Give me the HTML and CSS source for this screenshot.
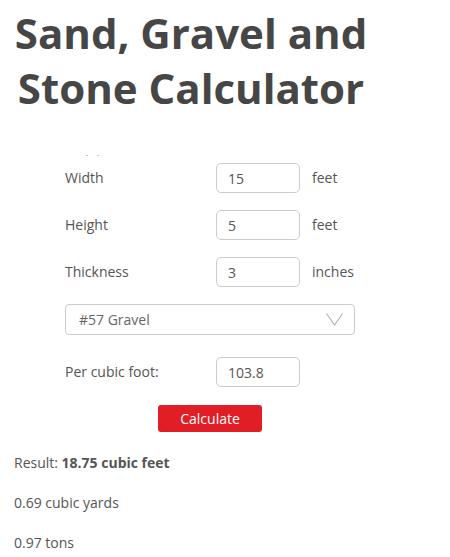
FILE: index.html
```html
<!DOCTYPE html>
<html lang="en">

<head>
    <meta charset="UTF-8">
    <meta name="viewport" content="width=device-width, initial-scale=1.0">
    <title>Sand, Gravel and Stone Calculator</title>
    <link rel="stylesheet" href="styles.css">
</head>

<body>

    <div class="page">
        <h1>Sand, Gravel and Stone Calculator</h1>

        <div class="calc">
            <div class="clipped"><i></i><i></i></div>

            <div class="row">
                <label for="width">Width</label>
                <input type="text" id="width" value="15">
                <span class="unit">feet</span>
            </div>
            <div class="row">
                <label for="height">Height</label>
                <input type="text" id="height" value="5">
                <span class="unit">feet</span>
            </div>
            <div class="row">
                <label for="thickness">Thickness</label>
                <input type="text" id="thickness" value="3">
                <span class="unit">inches</span>
            </div>

            <div class="select">
                <span>#57 Gravel</span>
                <svg width="17" height="13" viewBox="0 0 17 13">
                    <path d="M0.5 0.5 L8.5 12 L16.5 0.5" fill="none" stroke="#b0b0b0" stroke-width="1.1" />
                </svg>
            </div>

            <div class="row density">
                <label for="density">Per cubic foot:</label>
                <input type="text" id="density" value="103.8">
            </div>

            <div class="actions">
                <button>Calculate</button>
            </div>
        </div>

        <div class="results">
            <p>Result: <b>18.75 cubic feet</b></p>
            <p>0.69 cubic yards</p>
            <p>0.97 tons</p>
        </div>
    </div>

</body>

</html>
```

FILE: styles.css
```css
:root {
    --color-text: #555555;
    --color-title: #464646;
    --color-border: #cccccc;
    --accent: #e11d25;
    --font-family: "Open Sans", "Liberation Sans", Arial, sans-serif;
    --border-radius: 4px;
}

body {
    margin: 0;
    font-family: var(--font-family);
    font-size: 14px;
    color: var(--color-text);
    background: #ffffff;
}

.page {
    width: 382px;
}

h1 {
    margin: 0;
    padding-top: 5px;
    font-size: 42px;
    line-height: 55px;
    font-weight: 700;
    color: var(--color-title);
    text-align: center;
}

.calc {
    margin-top: 40px;
    padding-left: 65px;
    width: 290px;
}

.clipped {
    display: flex;
    height: 1px;
    padding-left: 21px;
    gap: 9px;
}

.clipped i {
    width: 2px;
    height: 1px;
    background: #c8c8c8;
}

.row {
    display: grid;
    grid-template-columns: 139px 84px auto;
    column-gap: 12px;
    align-items: center;
    margin-top: 10px;
    height: 37px;
}

.clipped+.row {
    margin-top: 3px;
}

.row label {
    line-height: 20px;
}

.row input {
    box-sizing: border-box;
    width: 84px;
    height: 30px;
    padding: 2px 11px 0;
    border: 1px solid var(--color-border);
    border-radius: 5px;
    font-family: var(--font-family);
    font-size: 14px;
    color: var(--color-text);
}

.select {
    box-sizing: border-box;
    display: flex;
    justify-content: space-between;
    align-items: center;
    margin-top: 14px;
    height: 31px;
    padding: 0 11px 1px 13px;
    border: 1px solid var(--color-border);
    border-radius: var(--border-radius);
    color: #666;
}

.row.density {
    margin-top: 18px;
}

.actions {
    display: flex;
    padding-left: 93px;
    margin-top: 15px;
}

.actions button {
    width: 104px;
    height: 27px;
    border: none;
    border-radius: 3px;
    background: var(--accent);
    color: #ffffff;
    font-family: var(--font-family);
    font-size: 14px;
    cursor: pointer;
}

.results {
    padding-left: 14px;
    margin-top: 21px;
}

.results p {
    margin: 0 0 20px;
    line-height: 20px;
}
```
